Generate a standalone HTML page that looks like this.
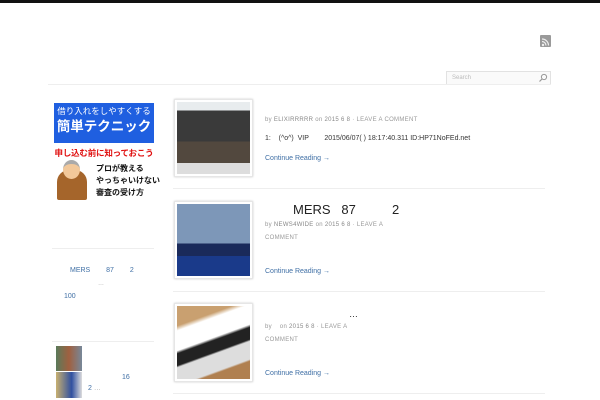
<!DOCTYPE html>
<html><head><meta charset="utf-8"><style>
*{margin:0;padding:0;box-sizing:border-box}
body{width:600px;height:400px;overflow:hidden;background:#fff;font-family:"Liberation Sans","Noto Sans CJK JP",sans-serif;position:relative}
.a{position:absolute}
.meta{font-size:6px;color:#999;letter-spacing:.3px}
.meta b{font-weight:normal;color:#888}
.cr{font-size:7px;color:#3f6fa5}
.sep{height:1px;background:#eee}
.th{border:1px solid #e6e6e6;box-shadow:0 0 2px #ccc;padding:2px;background:#fff}
</style></head><body>
<div class="a" style="left:0;top:0;width:600px;height:3px;background:#111"></div>
<div class="a" style="left:540px;top:35px;width:11px;height:12px;background:#9a9a9a;border-radius:1px">
<svg width="11" height="12" viewBox="0 0 11 12"><circle cx="3" cy="9" r="1.2" fill="#eee"/><path d="M2 5.5a4 4 0 0 1 4 4M2 3a6.5 6.5 0 0 1 6.5 6.5" stroke="#eee" stroke-width="1.2" fill="none"/></svg></div>
<div class="a" style="left:446px;top:71px;width:105px;height:14px;border:1px solid #e2e2e2;background:#fafafa;font-size:6px;color:#bbb;padding:3px 5px">Search</div>
<svg class="a" style="left:538px;top:73px" width="10" height="10"><circle cx="6" cy="4" r="2.6" stroke="#999" fill="none"/><path d="M4 6L1.5 8.5" stroke="#999" stroke-width="1.2"/></svg>
<div class="a sep" style="left:48px;top:84px;width:503px"></div>

<!-- ad -->
<div class="a" style="left:54px;top:103px;width:100px;height:40px;background:#1f5fe0;color:#fff;text-align:center;overflow:hidden">
<div style="font-size:8.5px;line-height:12px;margin-top:2px;white-space:nowrap">借り入れをしやすくする</div>
<div style="font-size:13.5px;font-weight:bold;line-height:20px;white-space:nowrap">簡単テクニック</div></div>
<div class="a" style="left:54px;top:147px;width:100px;font-size:8.5px;font-weight:bold;color:#e01010;text-align:center;white-space:nowrap;letter-spacing:-.2px">申し込む前に知っておこう</div>
<div class="a" style="left:57px;top:170px;width:30px;height:30px;background:#a5652b;border-radius:12px 12px 2px 2px"></div>
<div class="a" style="left:63px;top:160px;width:17px;height:19px;background:#f2c89a;border-radius:50%;border-top:4px solid #aaa"></div>
<div class="a" style="left:96px;top:163px;font-size:8px;font-weight:bold;line-height:12px;color:#111;white-space:nowrap">プロが教える<br>やっちゃいけない<br>審査の受け方</div>

<div class="a sep" style="left:52px;top:248px;width:102px"></div>
<div class="a" style="left:70px;top:267px;font-size:7px;color:#3f6fa5;word-spacing:14px">MERS 87 2</div>
<div class="a" style="left:98px;top:281px;font-size:6px;color:#aaa">…</div>
<div class="a" style="left:64px;top:293px;font-size:7px;color:#3f6fa5">100</div>
<div class="a sep" style="left:52px;top:341px;width:102px"></div>
<div class="a" style="left:56px;top:346px;width:26px;height:25px;background:linear-gradient(90deg,#5a7a5a,#a06040 50%,#789)"></div>
<div class="a" style="left:56px;top:372px;width:26px;height:26px;background:linear-gradient(90deg,#c8b070,#3050a0 60%,#ddd)"></div>
<div class="a" style="left:122px;top:374px;font-size:7px;color:#3f6fa5">16</div>
<div class="a" style="left:88px;top:385px;font-size:7px;color:#3f6fa5">2 <span style="color:#aaa">…</span></div>

<!-- post1 -->
<div class="a th" style="left:174px;top:99px;width:79px;height:78px"><div style="width:100%;height:100%;background:linear-gradient(180deg,#e8ecee 0 12%,#3a3a3a 12% 55%,#52483e 55% 85%,#ddd 85%)"></div></div>
<div class="a meta" style="left:265px;top:117px">by <b>ELIXIRRRRR</b> on <b>2015 6 8</b> · LEAVE A COMMENT</div>
<div class="a" style="left:265px;top:135px;font-size:7px;color:#333;white-space:pre">1:    (^o^)  VIP        2015/06/07( ) 18:17:40.311 ID:HP71NoFEd.net</div>
<div class="a cr" style="left:265px;top:155px">Continue Reading →</div>
<div class="a sep" style="left:173px;top:188px;width:372px"></div>

<!-- post2 -->
<div class="a th" style="left:174px;top:201px;width:79px;height:78px"><div style="width:100%;height:100%;background:linear-gradient(180deg,#7d97b8 0 55%,#1a2a5a 55% 72%,#1a3a8a 72%)"></div></div>
<div class="a" style="left:293px;top:202px;font-size:13px;color:#222;white-space:pre">MERS   87          2</div>
<div class="a meta" style="left:265px;top:219px;line-height:13px;width:118px">by <b>NEWS4WIDE</b> on <b>2015 6 8</b> · LEAVE A COMMENT</div>
<div class="a cr" style="left:265px;top:268px">Continue Reading →</div>
<div class="a sep" style="left:173px;top:291px;width:372px"></div>

<!-- post3 -->
<div class="a th" style="left:174px;top:303px;width:79px;height:79px"><div style="width:100%;height:100%;background:linear-gradient(160deg,#c9a070 0 20%,#fff 25% 45%,#222 48% 60%,#ddd 62% 80%,#b08050 82%)"></div></div>
<div class="a" style="left:349px;top:309px;font-size:9px;color:#222;letter-spacing:1px">…</div>
<div class="a meta" style="left:265px;top:321px;line-height:13px;width:100px">by &nbsp;&nbsp; on <b>2015 6 8</b> · LEAVE A COMMENT</div>
<div class="a cr" style="left:265px;top:370px">Continue Reading →</div>
<div class="a sep" style="left:173px;top:393px;width:372px"></div>
</body></html>
